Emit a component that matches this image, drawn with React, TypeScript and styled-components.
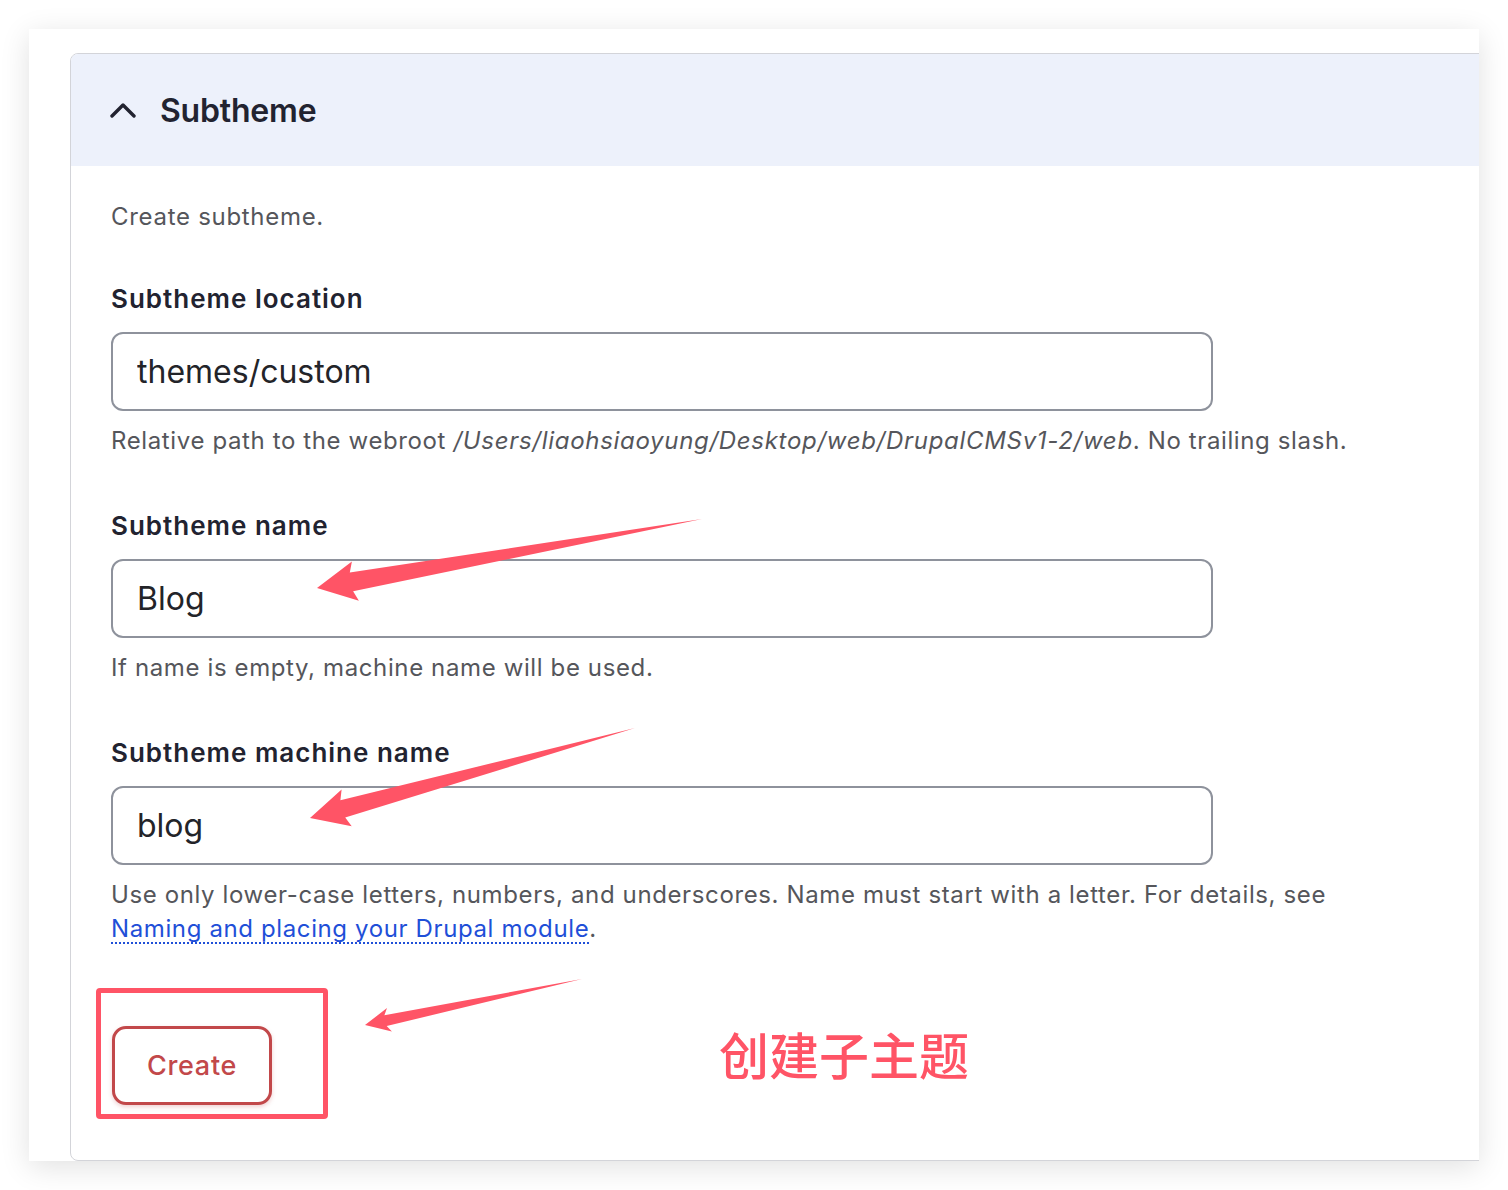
import React from "react";
import styled, { createGlobalStyle } from "styled-components";

const GlobalStyle = createGlobalStyle`
    html, body {
        margin: 0;
        padding: 0;
        background: #ffffff;
    }
    body {
        font-family: Inter, "Noto Sans", sans-serif;
        color: #222330;
    }
`;

const Page = styled.div`
    position: relative;
    width: 1508px;
    height: 1190px;
    overflow: hidden;
`;

const Frame = styled.div`
    margin: 29px;
    width: 1450px;
    height: 1132px;
    box-sizing: border-box;
    padding: 24px 0 0 41px;
    background: #ffffff;
    box-shadow: 0 6px 28px rgba(0, 0, 0, 0.12);
    overflow: hidden;
    display: flex;
    flex-direction: column;
`;

const Panel = styled.section`
    flex: 1;
    width: 1460px;
    flex-shrink: 0;
    border: 1px solid #d3d4d9;
    border-radius: 8px;
    overflow: hidden;
`;

const Summary = styled.div`
    height: 112px;
    background: #edf1fb;
    display: flex;
    align-items: center;
    gap: 24px;
    padding-left: 39px;
    font-size: 32px;
    font-weight: 600;
    color: #222330;
    letter-spacing: -0.2px;
`;

const Body = styled.div`
    padding: 34px 40px 0 40px;
`;

const Intro = styled.p`
    margin: 0 0 -3px;
    font-size: 24px;
    line-height: 34px;
    letter-spacing: 0.7px;
    color: #55565b;
`;

const Field = styled.div`
    margin-top: 51px;
`;

const Label = styled.label`
    display: block;
    font-size: 26px;
    line-height: 34px;
    font-weight: 600;
    letter-spacing: 1px;
    color: #222330;
    margin-bottom: 16px;
`;

const Input = styled.input`
    display: block;
    box-sizing: border-box;
    width: 1102px;
    height: 79px;
    border: 2px solid #8e929c;
    border-radius: 12px;
    padding: 0 24px;
    font-family: Inter, "Noto Sans", sans-serif;
    font-size: 32px;
    color: #232429;
    background: #ffffff;
    outline: none;
`;

const Description = styled.div`
    margin-top: 13px;
    font-size: 24px;
    line-height: 34px;
    letter-spacing: 0.62px;
    color: #55565b;
    max-width: 1260px;

    em {
        font-style: italic;
        letter-spacing: 0.7px;
    }
`;

const DocLink = styled.a`
    color: #1f4fd8;
    text-decoration: underline dotted;
    text-underline-offset: 5px;
    text-decoration-thickness: 2px;
`;

const Actions = styled.div`
    margin-top: 80px;
    padding-left: 1px;
`;

const Button = styled.button`
    box-sizing: border-box;
    width: 160px;
    height: 79px;
    border: 3px solid #c2484a;
    border-radius: 14px;
    background: #ffffff;
    color: #c2484a;
    font-family: Inter, "Noto Sans", sans-serif;
    font-size: 27px;
    font-weight: 500;
    letter-spacing: 0.7px;
    box-shadow: 0 2px 4px rgba(194, 72, 74, 0.25);
`;

const Overlay = styled.svg`
    position: absolute;
    left: 0;
    top: 0;
    pointer-events: none;
`;

const HighlightBox = styled.div`
    position: absolute;
    left: 96px;
    top: 988px;
    width: 232px;
    height: 131px;
    box-sizing: border-box;
    border: 5px solid #ff5466;
    border-radius: 4px;
`;

const Note = styled.div`
    position: absolute;
    left: 719px;
    top: 1023px;
    font-family: "Noto Sans CJK SC", sans-serif;
    font-size: 50px;
    line-height: 60px;
    font-weight: 500;
    color: #ff5466;
`;

type Pt = [number, number];

// tapered annotation arrow, tail is a sharp point
const arrowPoints = (tail: Pt, tip: Pt, headLen: number, headW: number, shaftW: number) => {
    const dx = tip[0] - tail[0];
    const dy = tip[1] - tail[1];
    const len = Math.hypot(dx, dy);
    const ux = dx / len;
    const uy = dy / len;
    const nx = -uy;
    const ny = ux;
    const bx = tip[0] - ux * headLen;
    const by = tip[1] - uy * headLen;
    const barbX = bx - ux * 4;
    const barbY = by - uy * 4;
    const pts: Pt[] = [
        tail,
        [bx + (nx * shaftW) / 2, by + (ny * shaftW) / 2],
        [barbX + (nx * headW) / 2, barbY + (ny * headW) / 2],
        tip,
        [barbX - (nx * headW) / 2, barbY - (ny * headW) / 2],
        [bx - (nx * shaftW) / 2, by - (ny * shaftW) / 2],
    ];
    return pts.map((p) => p.map((v) => v.toFixed(1)).join(",")).join(" ");
};

const ARROWS = [
    { tail: [702, 519] as Pt, tip: [317, 588] as Pt, head: 35, width: 40, shaft: 19 },
    { tail: [635, 728] as Pt, tip: [310, 818] as Pt, head: 34, width: 38, shaft: 18 },
    { tail: [582, 979] as Pt, tip: [365, 1025] as Pt, head: 21, width: 24, shaft: 11 },
];

const Chevron = () => (
    <svg width="26" height="16" viewBox="0 0 26 16">
        <polyline
            points="2,14 13,3 24,14"
            fill="none"
            stroke="#222330"
            strokeWidth="3.4"
            strokeLinecap="round"
            strokeLinejoin="round"
        />
    </svg>
);

const App = () => {
    return (
        <Page>
            <GlobalStyle />
            <Frame>
                <Panel>
                    <Summary>
                        <Chevron />
                        <span>Subtheme</span>
                    </Summary>
                    <Body>
                        <Intro>Create subtheme.</Intro>
                        <Field>
                            <Label>Subtheme location</Label>
                            <Input defaultValue="themes/custom" />
                            <Description>
                                Relative path to the webroot{" "}
                                <em>/Users/liaohsiaoyung/Desktop/web/DrupalCMSv1-2/web</em>. No trailing slash.
                            </Description>
                        </Field>
                        <Field>
                            <Label>Subtheme name</Label>
                            <Input defaultValue="Blog" />
                            <Description>If name is empty, machine name will be used.</Description>
                        </Field>
                        <Field>
                            <Label>Subtheme machine name</Label>
                            <Input defaultValue="blog" />
                            <Description>
                                Use only lower-case letters, numbers, and underscores. Name must start with a letter. For details, see{" "}
                                <DocLink href="#">Naming and placing your Drupal module</DocLink>.
                            </Description>
                        </Field>
                        <Actions>
                            <Button>Create</Button>
                        </Actions>
                    </Body>
                </Panel>
            </Frame>
            <HighlightBox />
            <Note>创建子主题</Note>
            <Overlay width="1508" height="1190" viewBox="0 0 1508 1190">
                {ARROWS.map((a, i) => (
                    <polygon
                        key={i}
                        points={arrowPoints(a.tail, a.tip, a.head, a.width, a.shaft)}
                        fill="#ff5466"
                    />
                ))}
            </Overlay>
        </Page>
    );
};

export default App;
